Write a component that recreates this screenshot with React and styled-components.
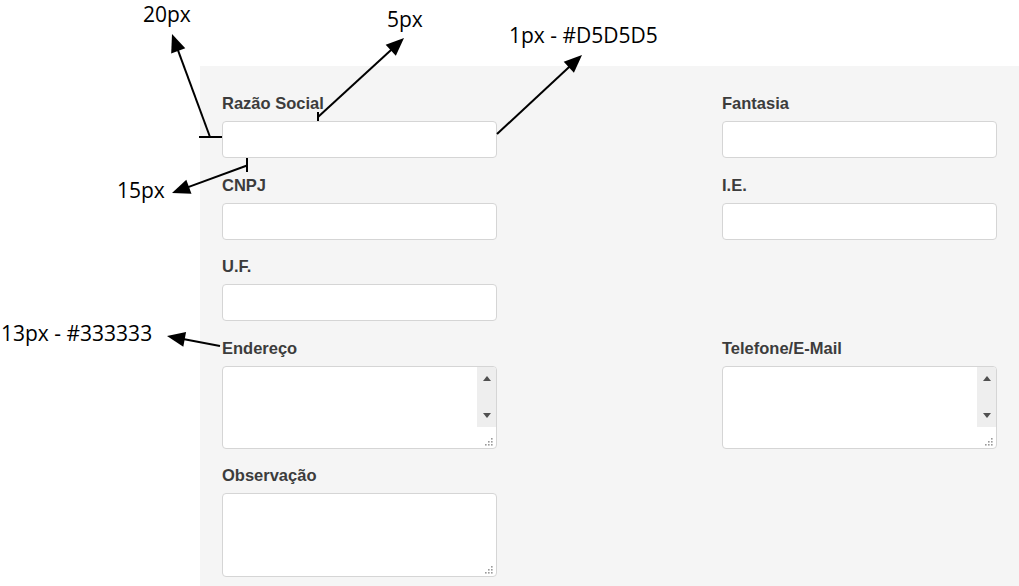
import React from "react";
import styled, { createGlobalStyle } from "styled-components";

const Global = createGlobalStyle`
  html, body { margin: 0; padding: 0; background: #ffffff; }
  body { font-family: "Liberation Sans", Arial, sans-serif; }
  * { box-sizing: border-box; }
`;

const Page = styled.div`
  position: relative;
  width: 1019px;
  height: 586px;
  overflow: hidden;
  background: #ffffff;
`;

const Panel = styled.div`
  margin: 66px 0 0 200px;
  height: 520px;
  background: #f5f5f5;
  padding: 27px 22px 0 22px;
`;

const FormGrid = styled.div`
  display: grid;
  grid-template-columns: 275px 275px;
  column-gap: 225px;
  row-gap: 16.5px;
`;

const Field = styled.div`
  display: flex;
  flex-direction: column;
`;

const Label = styled.label`
  display: block;
  font-family: "Liberation Sans", Arial, sans-serif;
  font-weight: 700;
  font-size: 16.5px;
  line-height: 20px;
  color: #3c3c3c;
  margin-bottom: 8px;
`;

const Input = styled.input`
  display: block;
  width: 100%;
  height: 37px;
  border: 1px solid #d5d5d5;
  border-radius: 4px;
  background: #ffffff;
  padding: 0 8px;
  font: 14px "Liberation Sans", Arial, sans-serif;
  outline: none;
`;

const AreaBox = styled.div`
  display: flex;
  width: 100%;
  height: ${(p) => p.$h}px;
  border: 1px solid #d5d5d5;
  border-radius: 4px;
  background: #ffffff;
  overflow: hidden;
`;

const Area = styled.textarea`
  flex: 1;
  border: none;
  resize: none;
  outline: none;
  background: transparent;
  padding: 6px 8px;
  font: 14px "Liberation Sans", Arial, sans-serif;
`;

const SideColumn = styled.div`
  width: 19px;
  display: flex;
  flex-direction: column;
`;

const Track = styled.div`
  flex: 1;
  background: #eeeeee;
  display: flex;
  flex-direction: column;
  justify-content: space-between;
  align-items: center;
  padding: 9px 0 9px;
`;

const Spacer = styled.div`
  flex: 1;
`;

const Corner = styled.div`
  height: 21px;
  display: flex;
  align-items: flex-end;
  justify-content: flex-end;
  padding: 0 3px 2px 0;
`;

const Grip = () => (
  <svg width="9" height="9" viewBox="0 0 9 9">
    {[
      [7, 1],
      [4, 4],
      [7, 4],
      [1, 7],
      [4, 7],
      [7, 7],
    ].map(([x, y], i) => (
      <rect key={i} x={x} y={y} width="1.6" height="1.6" fill="#9a9a9a" />
    ))}
  </svg>
);

const ArrowUp = () => (
  <svg width="8" height="5" viewBox="0 0 8 5">
    <polygon points="4,0 8,5 0,5" fill="#505050" />
  </svg>
);
const ArrowDown = () => (
  <svg width="8" height="5" viewBox="0 0 8 5">
    <polygon points="0,0 8,0 4,5" fill="#505050" />
  </svg>
);

const TextArea = ({ height, scroll }) => (
  <AreaBox $h={height}>
    <Area />
    <SideColumn>
      {scroll ? (
        <Track>
          <ArrowUp />
          <ArrowDown />
        </Track>
      ) : (
        <Spacer />
      )}
      <Corner>
        <Grip />
      </Corner>
    </SideColumn>
  </AreaBox>
);

const Overlay = styled.svg`
  position: absolute;
  left: 0;
  top: 0;
  pointer-events: none;
`;

const NoteText = styled.text`
  font-family: "Open Sans", "Noto Sans", sans-serif;
  font-size: 21px;
  fill: #000000;
`;

const Arrow = ({ from, to }) => {
  const [x1, y1] = from;
  const [x2, y2] = to;
  const dx = x2 - x1;
  const dy = y2 - y1;
  const len = Math.hypot(dx, dy);
  const ux = dx / len;
  const uy = dy / len;
  const L = 18;
  const W = 15;
  const bx = x2 - ux * L;
  const by = y2 - uy * L;
  const nx = -uy;
  const ny = ux;
  const p1 = `${bx + (nx * W) / 2},${by + (ny * W) / 2}`;
  const p2 = `${bx - (nx * W) / 2},${by - (ny * W) / 2}`;
  return (
    <g>
      <line x1={x1} y1={y1} x2={bx + ux * 3} y2={by + uy * 3} stroke="#000" strokeWidth="2" />
      <polygon points={`${x2},${y2} ${p1} ${p2}`} fill="#000" />
    </g>
  );
};

const Tick = ({ x1, y1, x2, y2 }) => (
  <line x1={x1} y1={y1} x2={x2} y2={y2} stroke="#000" strokeWidth="2" />
);

const Annotations = () => (
  <Overlay width="1019" height="586" viewBox="0 0 1019 586">
    <NoteText x="143" y="21.5">20px</NoteText>
    <NoteText x="387" y="27">5px</NoteText>
    <NoteText x="509" y="42.5">1px - #D5D5D5</NoteText>
    <NoteText x="117" y="198">15px</NoteText>
    <NoteText x="1" y="341">13px - #333333</NoteText>

    <Tick x1={199} y1={137} x2={222} y2={137} />
    <Arrow from={[210, 137]} to={[172, 34]} />

    <Tick x1={247} y1={158} x2={247} y2={172} />
    <Arrow from={[247, 165.5]} to={[172, 193]} />

    <Tick x1={318} y1={112} x2={318} y2={121} />
    <Arrow from={[318, 117]} to={[404, 38]} />

    <Arrow from={[497, 134]} to={[582, 55]} />

    <Arrow from={[220, 346]} to={[167, 336]} />
  </Overlay>
);

export default function App() {
  return (
    <Page>
      <Global />
      <Panel>
        <FormGrid>
          <Field>
            <Label>Razão Social</Label>
            <Input />
          </Field>
          <Field>
            <Label>Fantasia</Label>
            <Input />
          </Field>
          <Field>
            <Label>CNPJ</Label>
            <Input />
          </Field>
          <Field>
            <Label>I.E.</Label>
            <Input />
          </Field>
          <Field>
            <Label>U.F.</Label>
            <Input />
          </Field>
          <Spacer />
          <Field>
            <Label>Endereço</Label>
            <TextArea height={83} scroll />
          </Field>
          <Field>
            <Label>Telefone/E-Mail</Label>
            <TextArea height={83} scroll />
          </Field>
          <Field>
            <Label>Observação</Label>
            <TextArea height={84} />
          </Field>
        </FormGrid>
      </Panel>
      <Annotations />
    </Page>
  );
}
